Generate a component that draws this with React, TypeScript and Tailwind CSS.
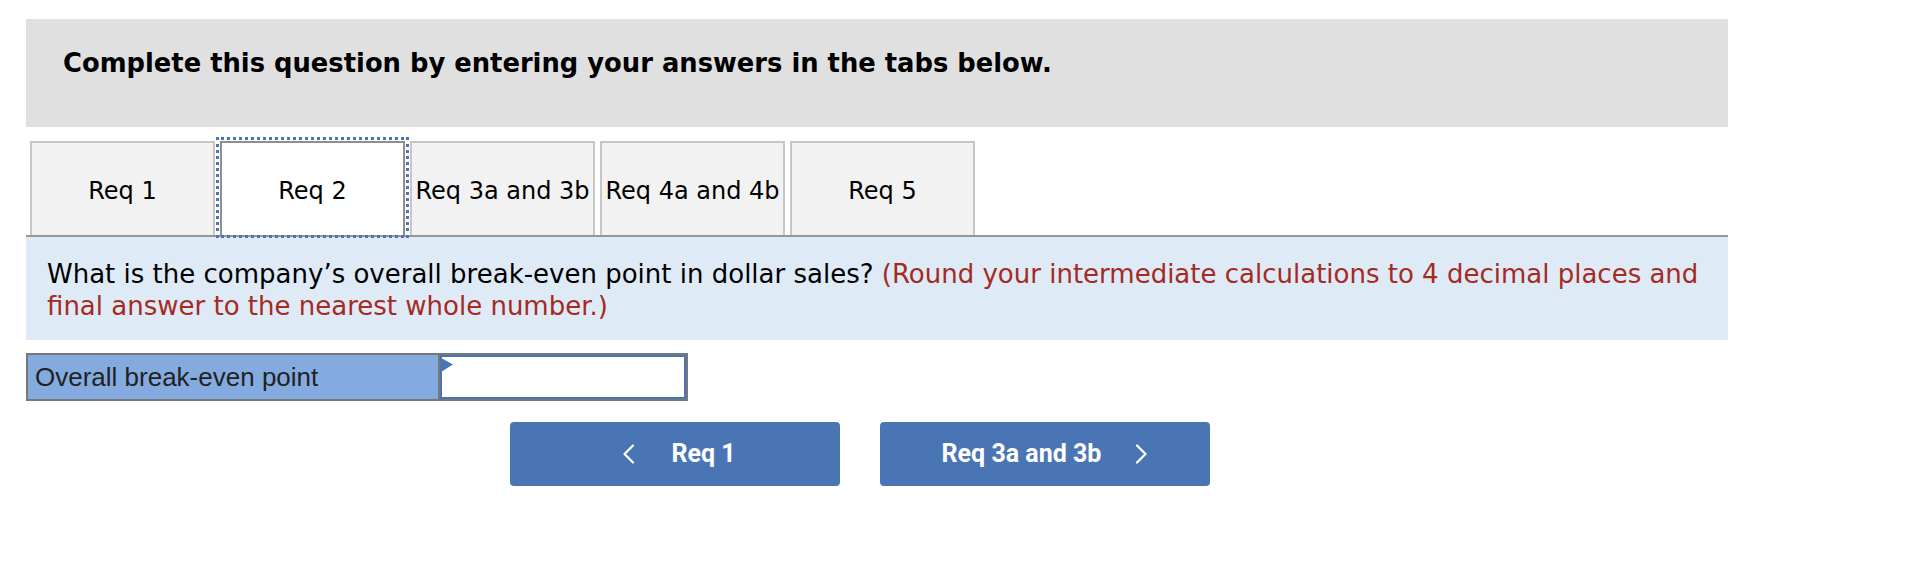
import React from "react";

const tabs = ["Req 1", "Req 2", "Req 3a and 3b", "Req 4a and 4b", "Req 5"];

function Chevron({ dir }: { dir: "left" | "right" }) {
  return (
    <svg width="13" height="20" viewBox="0 0 13 20" fill="none" className="shrink-0">
      <polyline
        points={dir === "left" ? "11,1.5 2.5,10 11,18.5" : "2,1.5 10.5,10 2,18.5"}
        stroke="white"
        strokeWidth="2.2"
        strokeLinecap="round"
        strokeLinejoin="round"
      />
    </svg>
  );
}

export default function App() {
  return (
    <div className="w-full h-[576px] bg-white font-['DejaVu_Sans',Verdana,sans-serif] text-black">
      <div className="ml-[26px] pt-[19px] w-[1702px]">
        <div className="h-[108px] bg-[#e0e0e0] pt-[28px] pl-[37px] text-[25.8px] leading-[32px] font-bold whitespace-nowrap">
          Complete this question by entering your answers in the tabs below.
        </div>

        <div className="mt-[14px] flex gap-[5px] pl-[4px] border-b-2 border-[#979797]">
          {tabs.map((t, i) => {
            const active = i === 1;
            return (
              <div
                key={t}
                className={
                  active
                    ? "relative w-[185px] h-[94px] border-2 border-b-0 border-[#8f8f8f] bg-white flex items-center justify-center pt-[3px] text-[24px] leading-[32px] whitespace-nowrap"
                    : "relative w-[185px] h-[94px] border-2 border-b-0 border-[#c6c6c6] bg-[#f2f2f2] flex items-center justify-center pt-[3px] text-[24px] leading-[32px] whitespace-nowrap"
                }
              >
                {t}
                {active && (
                  <div className="absolute -left-[6px] -right-[6px] -top-[6px] -bottom-[3px] border-[3px] border-dotted border-[#4a74b4] z-10 pointer-events-none" />
                )}
              </div>
            );
          })}
        </div>

        <div className="bg-[#deebf7] h-[103px] pt-[21px] pl-[21px] text-[26px] leading-[32px] whitespace-nowrap">
          What is the company’s overall break-even point in dollar sales?{" "}
          <span className="text-[#a52a22]">
            (Round your intermediate calculations to 4 decimal places and
            <br />
            final answer to the nearest whole number.)
          </span>
        </div>

        <div className="mt-[13px] flex w-[662px] h-[48px] border-2 border-[#777777]">
          <div className="w-[412px] bg-[#84abe0] border-r-2 border-[#777777] pl-[7px] flex items-center text-[26px] font-['Liberation_Sans',Arial,sans-serif] text-[#222222] whitespace-nowrap">
            Overall break-even point
          </div>
          <div className="relative flex-1 bg-white border-2 border-[#4a74b4]">
            <svg width="13" height="15" viewBox="0 0 13 15" className="absolute -left-[1px] top-[1px]">
              <polygon points="0,0 12,6.5 0,14" fill="#4a74b4" />
            </svg>
          </div>
        </div>

        <div className="mt-[21px] flex gap-[40px] pl-[484px]">
          <div className="w-[330px] h-[64px] rounded-[4px] bg-[#4a75b5] text-white font-['Roboto',sans-serif] font-bold text-[25px] flex items-center justify-center gap-[36px] pl-[8px]">
            <Chevron dir="left" />
            <span>Req 1</span>
          </div>
          <div className="w-[330px] h-[64px] rounded-[4px] bg-[#4a75b5] text-white font-['Roboto',sans-serif] font-bold text-[25px] flex items-center justify-center gap-[34px]">
            <span>Req 3a and 3b</span>
            <Chevron dir="right" />
          </div>
        </div>
      </div>
    </div>
  );
}
